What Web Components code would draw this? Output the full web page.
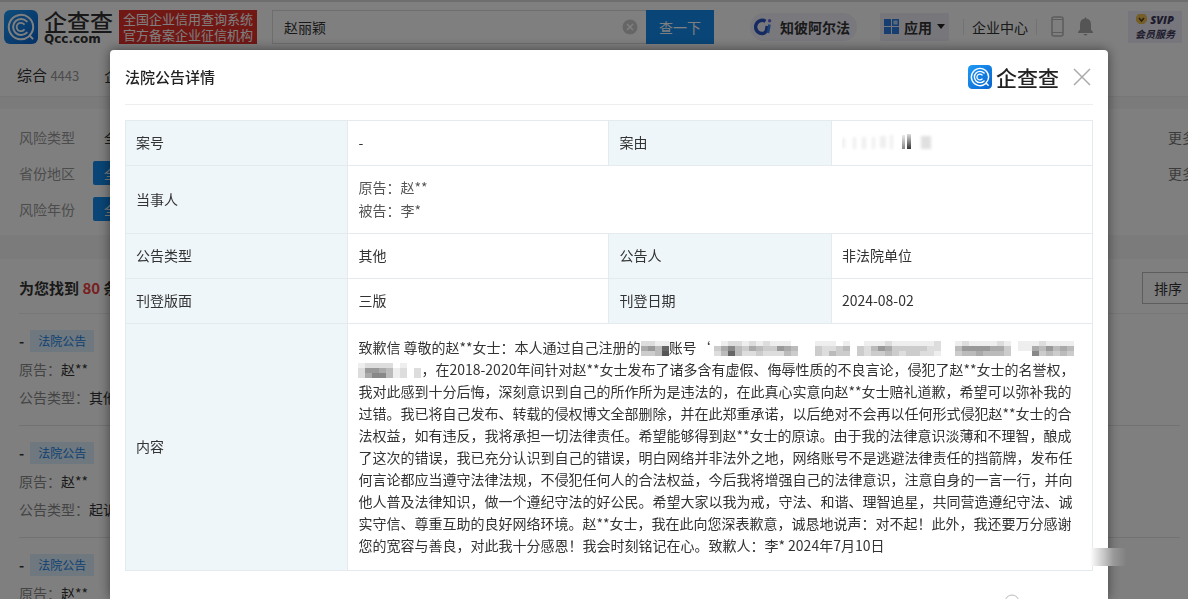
<!DOCTYPE html>
<html lang="zh-CN">
<head>
<meta charset="utf-8">
<title>企查查</title>
<style>
    body {
        margin: 0;
        height: 100vh;
        overflow: hidden;
        background: #f7f7f7;
        color: #333;
        font: 14px/22px "Noto Sans CJK SC", "Noto Sans", sans-serif;
        text-spacing-trim: space-all;
    }
</style>
</head>
<body>
<qcc-header></qcc-header>
<qcc-tabs></qcc-tabs>
<qcc-filters></qcc-filters>
<qcc-results>
    <qcc-notice type="其他"></qcc-notice>
    <qcc-notice type="起诉状"></qcc-notice>
    <qcc-notice type="其他"></qcc-notice>
</qcc-results>
<qcc-modal heading="法院公告详情">
    <notice-detail></notice-detail>
</qcc-modal>

<script>
const define = (name, html, setup) => {
    customElements.define(name, class extends HTMLElement {
        constructor() {
            super()
            this.attachShadow({ mode: 'open' })
        }

        connectedCallback() {
            this.shadowRoot.innerHTML = typeof html === 'function' ? html(this) : html
            if (setup) setup(this)
        }
    })
}

define('qcc-mark', /*html*/ `
    <style>
        :host { display: block; width: var(--mark-size, 24px); height: var(--mark-size, 24px); flex: none; }
        svg { display: block; width: 100%; height: 100%; }
    </style>
    <svg viewBox="0 0 34 34" aria-hidden="true">
        <defs>
            <linearGradient id="g" x1="0" y1="0" x2="1" y2="1">
                <stop offset="0" stop-color="#1e9af5"/>
                <stop offset="1" stop-color="#0a63cf"/>
            </linearGradient>
        </defs>
        <rect width="34" height="34" rx="6" fill="url(#g)"/>
        <g fill="none" stroke="#fff" stroke-linecap="round">
            <path d="M24.500 26.700A12.2 12.2 0 1 1 29.2 17C29.2 20.500 27.500 23.500 25.500 25.500L28.600 28.600" stroke-width="2"/>
            <path d="M22.800 11.400A8 8 0 1 0 22.800 22.600" stroke-width="2"/>
            <path d="M20 14.200A4.200 4.200 0 1 0 20 19.800" stroke-width="1.800"/>
        </g>
    </svg>
`)

define('qcc-header', /*html*/ `
    <style>
        * { box-sizing: border-box; }
        :host {
            box-sizing: border-box;
            display: flex;
            align-items: center;
            height: 51px;
            padding: 0 6px 0 4px;
            background: #fff;
            border-top: 2px solid #ddd;
            white-space: nowrap;
        }
        a { color: inherit; text-decoration: none; }
        .logo { display: flex; align-items: center; --mark-size: 34px; gap: 6px; }
        .name { width: 71px; }
        .name b { display: block; font-size: 23px; line-height: 24px; font-weight: 500; }
        .name small { display: block; font: bold 12px/12px "DejaVu Sans", sans-serif; }
        .slogan {
            margin-left: 4px;
            padding: 1px 4px;
            background: #e2302b;
            color: #fff;
            font-size: 13px;
            line-height: 16px;
        }
        form { display: flex; margin-left: 15px; height: 34px; width: 442px; }
        .box { display: flex; flex: 1; align-items: center; border: 1px solid #ddd; border-right: 0; padding: 0 8px 0 11px; }
        input { flex: 1; min-width: 0; border: 0; padding: 0; outline: none; background: none; color: #333; font: inherit; }
        .box svg { width: 16px; }
        form button { width: 68px; border: 0; background: #128bed; color: #fff; font: inherit; }
        nav { display: flex; flex: 1; align-items: center; gap: 14px; margin-left: 36px; }
        nav a { display: flex; align-items: center; height: 28px; }
        nav svg { display: block; flex: none; }
        .alpha { gap: 8px; margin-right: 9px; padding: 0 7px 0 4px; border-radius: 14px; background: #f1f1fb; font-weight: 700; }
        .apps { gap: 5px; padding: 0 4px; background: #ededf6; font-weight: 700; border-radius: 2px; }
        nav .center { padding: 0 8px; border-left: 1px solid #e5e5e5; border-right: 1px solid #e5e5e5; height: 16px; }
        nav .svip { flex-direction: column; margin-left: auto; height: 32px; padding: 1px 7px; background: #ececf8; font: italic 700 10px/14px "Noto Sans CJK SC", sans-serif; color: #3c3858; }
        .svip span { display: flex; align-items: center; gap: 3px; font: italic 800 11px/15px "Open Sans", sans-serif; }
    </style>
    <a class="logo" href="#" aria-label="企查查">
        <qcc-mark></qcc-mark>
        <span class="name"><b>企查查</b><small>Qcc.com</small></span>
    </a>
    <div class="slogan">全国企业信用查询系统<br>官方备案企业征信机构</div>
    <form>
        <div class="box">
            <input type="text" value="赵丽颖" aria-label="搜索">
            <svg viewBox="0 0 16 16"><circle cx="8" cy="8" r="7.5" fill="#ccc"/><path d="M5 5l6 6M11 5l-6 6" stroke="#fff" stroke-width="1.6"/></svg>
        </div>
        <button type="button">查一下</button>
    </form>
    <nav>
        <a class="alpha" href="#">
            <svg width="18" height="18" viewBox="0 0 18 18">
                <path d="M11.5 3.2A6.6 6.6 0 1 0 9.5 15.4Q12 14.6 12.6 11.5L13.2 8" fill="none" stroke="#2c55c4" stroke-width="3.4"/>
                <path d="M15.5 6.5L14 15" stroke="#3a83e8" stroke-width="2.6"/>
                <circle cx="15.6" cy="2.8" r="1.7" fill="#6f6bea"/>
            </svg>
            知彼阿尔法
        </a>
        <a class="apps" href="#">
            <svg width="15" height="15" viewBox="0 0 15 15">
                <path d="M0 0h7v7H0zM0 8h7v7H0zM8 8h7v7H8z" fill="#2d7de0"/><path d="M8.7.7h5.6v5.6H8.7z" fill="#b5d3f7" stroke="#2d7de0" stroke-width="1.4"/>
            </svg>
            应用
            <svg width="8" height="5" viewBox="0 0 8 5"><path d="M0 0h8L4 5z" fill="#222"/></svg>
        </a>
        <a class="center" href="#">企业中心</a>
        <a href="#" aria-label="手机版">
            <svg width="13" height="21" viewBox="0 0 13 21"><rect x="1" y="1" width="11" height="19" rx="2" fill="none" stroke="#bbb" stroke-width="1.6"/><path d="M1 16.5h11M1 3.5h11" stroke="#bbb"/></svg>
        </a>
        <a href="#" aria-label="消息">
            <svg width="15" height="19" viewBox="0 0 15 19"><path d="M7.500 0l1 1.500C11.500 2 13 4.500 13 7.500v5L15 15v1H0v-1l2-2.500v-5C2 4.500 3.500 2 6.500 1.500zM5.500 17h4q-.5 1.600-2 1.600T5.500 17z" fill="#aaa"/></svg>
        </a>
        <a class="svip" href="#">
            <span><svg width="11" height="10" viewBox="0 0 11 10"><path d="M2 0h7l2 3v4L8 10H3L0 7V3z" fill="#e9bd52"/><path d="M3 4l2.500 3L8 4" fill="none" stroke="#5a3a10" stroke-width="1.500"/></svg>SVIP</span>
            会员服务
        </a>
    </nav>
`)

define('qcc-tabs', /*html*/ `
    <style>
        :host { box-sizing: border-box; display: flex; align-items: center; gap: 25px; height: 46px; padding: 4px 17px 0; background: #fff; border-bottom: 1px solid #eee; }
        a { color: inherit; text-decoration: none; font-size: 15px; }
        small { font-size: 13px; color: #999; }
    </style>
    <a href="#">综合 <small>4443</small></a>
    <a href="#">企业</a>
`)

define('qcc-filters', /*html*/ `
    <style>
        :host { display: block; margin-top: 12px; padding: 10px 0 8px 19px; background: #fff; }
        div { display: flex; align-items: center; height: 36px; }
        span { width: 74px; color: #999; }
        button { width: 50px; height: 24px; border: 0; border-radius: 2px; padding: 0; background: none; color: #333; font: inherit; }
        button.on { background: #128bed; color: #fff; }
        a { margin-left: auto; margin-right: -8px; color: #777; text-decoration: none; }
    </style>
    <div><span>风险类型</span><button type="button">全部</button><a href="#">更多</a></div>
    <div><span>省份地区</span><button type="button" class="on">全部</button><a href="#">更多</a></div>
    <div><span>风险年份</span><button type="button" class="on">全部</button></div>
`)

define('qcc-results', /*html*/ `
    <style>
        :host { display: block; margin-top: 24px; padding: 4px 0 0 19px; background: #fff; }
        header { display: flex; align-items: center; height: 50px; border-bottom: 1px solid #eee; }
        h2 { flex: 1; margin: 0; font-size: 15px; font-weight: 700; }
        em { color: #f04040; font-style: normal; }
        button { width: 60px; height: 32px; margin-right: -14px; border: 1px solid #bbb; padding: 0 11px; background: #fff; color: #333; font: inherit; text-align: left; }
    </style>
    <header><h2>为您找到 <em>80</em> 条结果</h2><button type="button">排序</button></header>
    <slot></slot>
`)

define('qcc-notice', el => /*html*/ `
    <style>
        :host { display: block; height: 112px; box-sizing: border-box; padding-top: 16px; margin-right: 8px; border-bottom: 1px solid #e5e5e5; }
        div { display: flex; align-items: center; gap: 6px; height: 22px; }
        a { padding: 0 8px; background: #dfefff; color: #1585e6; font-size: 12px; text-decoration: none; }
        p { margin: 6px 0 0; color: #888; }
        span { color: #333; }
    </style>
    <div><b>-</b><a href="#">法院公告</a></div>
    <p>原告：<span>赵**</span></p>
    <p>公告类型：<span>${el.getAttribute('type')}</span></p>
`)

define('qcc-modal', el => /*html*/ `
    <style>
        :host { position: fixed; inset: 0; display: flex; padding: 50px 80px 0 110px; background: rgb(0 0 0 / 0.5); }
        section {
            position: relative;
            flex: 1;
            padding: 0 15px;
            background: #fff;
            border-radius: 4px 4px 0 0;
            box-shadow: 0 0 12px rgb(0 0 0 / 0.5);
        }
        header { display: flex; align-items: center; height: 54px; margin-bottom: 15px; border-bottom: 1px solid #eee; }
        h1 { flex: 1; margin: 0; font-size: 15px; font-weight: 500; color: #222; }
        .brand { display: flex; align-items: center; gap: 4px; margin-right: 14px; font-size: 21px; font-weight: 500; color: #222; }
        button { border: 0; padding: 0; margin-right: 2px; background: none; line-height: 0; }
        .smudge {
            position: absolute;
            right: -18px;
            top: 498px;
            width: 36px;
            height: 18px;
            background: linear-gradient(90deg, #fff, #c4c4c4 40%, #999 65%, #808080);
        }
        .help { position: absolute; right: 88px; top: 544px; }
    </style>
    <section role="dialog" aria-label="${el.getAttribute('heading')}">
        <header>
            <h1>${el.getAttribute('heading')}</h1>
            <div class="brand"><qcc-mark></qcc-mark>企查查</div>
            <button type="button" aria-label="关闭">
                <svg width="18" height="18" viewBox="0 0 18 18"><path d="M1 1l16 16M17 1L1 17" stroke="#aaa" stroke-width="1.5"/></svg>
            </button>
        </header>
        <slot></slot>
        <div class="smudge"></div>
        <svg class="help" width="16" height="16" viewBox="0 0 16 16"><circle cx="8" cy="8" r="7" fill="none" stroke="#bbb"/></svg>
    </section>
`, el => {
    el.shadowRoot.querySelector('button').addEventListener('click', () => el.remove())
})

// Pixelated cover for hidden words: one hex digit per cell, 0 is dark and f is white, rows split by "/"
define('pixel-mask', el => {
    const rows = el.getAttribute('cells').split('/')
    const w = rows[0].length * 7
    const h = rows.length * 5
    const rects = rows.map((row, y) => [...row].map((c, x) =>
        `<rect x="${x * 7}" y="${y * 5}" width="7" height="5" fill="#${c}${c}${c}"/>`).join('')).join('')
    return /*html*/ `
        <style>
            :host { display: inline-block; vertical-align: -3px; height: ${h}px; line-height: 0; }
        </style>
        <svg width="${w}" height="${h}" shape-rendering="crispEdges" aria-hidden="true">${rects}</svg>
    `
})

define('notice-detail', /*html*/ `
    <style>
        table { width: 100%; border-collapse: collapse; table-layout: fixed; }
        th, td { border: 1px solid #e4eaed; padding: 10px 10px 12px; text-align: left; font-weight: 400; color: #333; }
        th { background: #eef6f9; }
        .label { width: 23%; }
        .value { width: 27%; }
        .party { padding: 10px 10px 11px; line-height: 23px; color: #555; }
        .text { padding: 12px 10px 14px; }
        .smear { display: block; }
    </style>
    <table>
        <colgroup><col class="label"><col class="value"><col class="label"><col class="value"></colgroup>
        <tr>
            <th>案号</th><td>-</td><th>案由</th>
            <td>
                <svg class="smear" width="100" height="18" viewBox="0 0 100 18" aria-hidden="true">
                    <defs>
                        <linearGradient id="d" x1="0" y1="0" x2="0" y2="1"><stop offset="0" stop-color="#ddd"/><stop offset="1" stop-color="#333"/></linearGradient>
                        <filter id="b"><feGaussianBlur stdDeviation="1.500"/></filter>
                    </defs>
                    <g filter="url(#b)">
                        <path d="M0 5h3v10H0zM11 4h3v12h-3zM20 4h4v12h-4zM30 4h3v12h-3zM38 3h6v12h-6zM48 2h3v14h-3z" fill="#eee"/>
                        <path d="M79 3h10v13H79z" fill="#e0e0e0"/>
                    </g>
                    <path d="M60 2h3v14h-3z" fill="url(#d)" opacity=".6"/><path d="M65 1h4v15h-4z" fill="url(#d)"/>
                </svg>
            </td>
        </tr>
        <tr><th>当事人</th><td class="party" colspan="3">原告：赵**<br>被告：李*</td></tr>
        <tr><th>公告类型</th><td>其他</td><th>公告人</th><td>非法院单位</td></tr>
        <tr><th>刊登版面</th><td>三版</td><th>刊登日期</th><td>2024-08-02</td></tr>
        <tr>
            <th>内容</th>
            <td class="text" colspan="3">致歉信 尊敬的赵**女士：本人通过自己注册的<pixel-mask cells="ddee/a9b6/ccb5"></pixel-mask>账号‘ <pixel-mask cells="feddededeeef/ca8bcabcc9ab/db6bddcdddbc"></pixel-mask> <pixel-mask cells="ffeeefeffeeedeeeeeedffedeeeedefeeedeeee/ffcddcbfcdb9acccccddffb9999aacfeeab9bab/ffcdbccfcdccbcdccddeffcbbabbbcfff8cbcbc"></pixel-mask> <pixel-mask cells="eddddfeff/d99abedfd/da88bedfd"></pixel-mask>，在2018-2020年间针对赵**女士发布了诸多含有虚假、侮辱性质的不良言论，侵犯了赵**女士的名誉权，我对此感到十分后悔，深刻意识到自己的所作所为是违法的，在此真心实意向赵**女士赔礼道歉，希望可以弥补我的过错。我已将自己发布、转载的侵权博文全部删除，并在此郑重承诺，以后绝对不会再以任何形式侵犯赵**女士的合法权益，如有违反，我将承担一切法律责任。希望能够得到赵**女士的原谅。由于我的法律意识淡薄和不理智，酿成了这次的错误，我已充分认识到自己的错误，明白网络并非法外之地，网络账号不是逃避法律责任的挡箭牌，发布任何言论都应当遵守法律法规，不侵犯任何人的合法权益，今后我将增强自己的法律意识，注意自身的一言一行，并向他人普及法律知识，做一个遵纪守法的好公民。希望大家以我为戒，守法、和谐、理智追星，共同营造遵纪守法、诚实守信、尊重互助的良好网络环境。赵**女士，我在此向您深表歉意，诚恳地说声：对不起！此外，我还要万分感谢您的宽容与善良，对此我十分感恩！我会时刻铭记在心。致歉人：李* 2024年7月10日</td>
        </tr>
    </table>
`)
</script>
</body>
</html>
